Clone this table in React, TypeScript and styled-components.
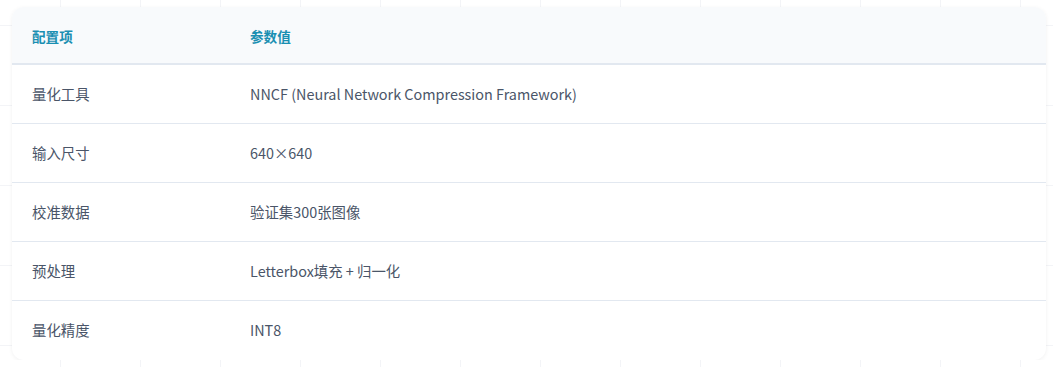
import styled, { createGlobalStyle } from 'styled-components';

const GlobalStyle = createGlobalStyle`
	html, body {
		margin: 0;
		padding: 0;
		background-color: #ffffff;
		background-image:
			linear-gradient(to right, #f3f4f7 1px, transparent 1px),
			linear-gradient(to bottom, #f3f4f7 1px, transparent 1px);
		background-size: 80px 80px;
		background-position: 60px 25px;
		font-family: 'Noto Sans CJK SC', 'Noto Sans', sans-serif;
	}
`;

const Page = styled.div`
	padding: 7px 7px 0 12px;
`;

const Card = styled.div`
	width: 1034px;
	background: #ffffff;
	border-radius: 12px;
	overflow: hidden;
	box-shadow: 0 1px 4px rgba(15, 23, 42, 0.06);
`;

const Table = styled.table`
	width: 100%;
	border-collapse: collapse;
	table-layout: fixed;
`;

const HeadCell = styled.th<{ width?: string }>`
	box-sizing: border-box;
	width: ${(p) => p.width || 'auto'};
	text-align: left;
	padding: 21px 20px 19px;
	line-height: 16px;
	font-size: 13.6px;
	font-weight: 700;
	color: #1a8fb2;
	background: #f8fafc;
	border-bottom: 2px solid #e2e8f0;
`;

const Row = styled.tr`
	td {
		border-bottom: 1px solid #e2e8f0;
	}
	&:last-child td {
		border-bottom-color: transparent;
	}
`;

const Cell = styled.td`
	padding: 20px;
	line-height: 18px;
	font-size: 14.4px;
	color: #4a5568;
`;

const rows = [
	['量化工具', 'NNCF (Neural Network Compression Framework)'],
	['输入尺寸', '640×640'],
	['校准数据', '验证集300张图像'],
	['预处理', 'Letterbox填充 + 归一化'],
	['量化精度', 'INT8'],
];

export default function App() {
	return (
		<>
			<GlobalStyle />
			<Page>
				<Card>
					<Table>
						<thead>
							<tr>
								<HeadCell width="218px">配置项</HeadCell>
								<HeadCell>参数值</HeadCell>
							</tr>
						</thead>
						<tbody>
							{rows.map(([key, value]) => (
								<Row key={key}>
									<Cell>{key}</Cell>
									<Cell>{value}</Cell>
								</Row>
							))}
						</tbody>
					</Table>
				</Card>
			</Page>
		</>
	);
}
